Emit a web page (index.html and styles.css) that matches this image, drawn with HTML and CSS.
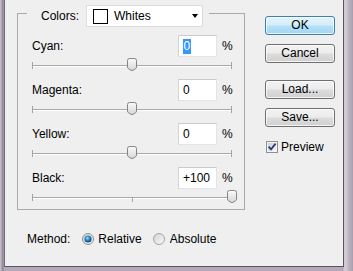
FILE: index.html
```html
<!DOCTYPE html>
<html>
<head>
<meta charset="utf-8">
<link rel="stylesheet" href="styles.css">
</head>
<body>
<svg class="defs" aria-hidden="true">
  <defs>
    <linearGradient id="thumbG" x1="0" y1="0" x2="0" y2="1">
      <stop offset="0" stop-color="#fafafa"/>
      <stop offset="1" stop-color="#d6d6d6"/>
    </linearGradient>
    <linearGradient id="radioBg" x1="0" y1="0" x2="1" y2="1">
      <stop offset="0" stop-color="#d2d2d2"/>
      <stop offset="1" stop-color="#fbfbfb"/>
    </linearGradient>
    <radialGradient id="dotG" cx="0.42" cy="0.38" r="0.65">
      <stop offset="0" stop-color="#9be0ff"/>
      <stop offset="0.45" stop-color="#2d8ccf"/>
      <stop offset="1" stop-color="#0d3b63"/>
    </radialGradient>
    <linearGradient id="cbInner" x1="0" y1="0" x2="1" y2="1">
      <stop offset="0" stop-color="#cbcfd5"/>
      <stop offset="1" stop-color="#f6f6f6"/>
    </linearGradient>
    <symbol id="thumb" viewBox="0 0 10 13">
      <path d="M0.5,2.5 Q0.5,0.5 2.5,0.5 H7.5 Q9.5,0.5 9.5,2.5 V9 Q9.5,10 8.5,10.8 L6,12.3 Q5,12.8 4,12.3 L1.5,10.8 Q0.5,10 0.5,9 Z" fill="url(#thumbG)" stroke="#858585"/>
    </symbol>
  </defs>
</svg>
<div class="dialog">
  <div class="top">
    <div class="group">
      <div class="legend">
        <span class="legend-label">Colors:</span>
        <div class="select">
          <span class="swatch"></span>
          <span class="select-text">Whites</span>
          <span class="arrow"></span>
        </div>
      </div>
      <div class="rows">
        <div class="row">
          <div class="field">
            <span class="label">Cyan:</span>
            <div class="input"><span class="sel">0</span></div>
            <span class="pct">%</span>
          </div>
          <div class="slider">
            <div class="track"><i class="tick t-start"></i><i class="tick t-mid"></i><i class="tick t-end"></i></div>
            <svg class="thumb" style="left:50%" viewBox="0 0 10 13"><use href="#thumb"/></svg>
          </div>
        </div>
        <div class="row">
          <div class="field">
            <span class="label">Magenta:</span>
            <div class="input"><span>0</span></div>
            <span class="pct">%</span>
          </div>
          <div class="slider">
            <div class="track"><i class="tick t-start"></i><i class="tick t-mid"></i><i class="tick t-end"></i></div>
            <svg class="thumb" style="left:50%" viewBox="0 0 10 13"><use href="#thumb"/></svg>
          </div>
        </div>
        <div class="row">
          <div class="field">
            <span class="label">Yellow:</span>
            <div class="input"><span>0</span></div>
            <span class="pct">%</span>
          </div>
          <div class="slider">
            <div class="track"><i class="tick t-start"></i><i class="tick t-mid"></i><i class="tick t-end"></i></div>
            <svg class="thumb" style="left:50%" viewBox="0 0 10 13"><use href="#thumb"/></svg>
          </div>
        </div>
        <div class="row">
          <div class="field">
            <span class="label">Black:</span>
            <div class="input"><span>+100</span></div>
            <span class="pct">%</span>
          </div>
          <div class="slider">
            <div class="track"><i class="tick t-start"></i><i class="tick t-mid"></i><i class="tick t-end"></i></div>
            <svg class="thumb" style="left:100%" viewBox="0 0 10 13"><use href="#thumb"/></svg>
          </div>
        </div>
      </div>
    </div>
    <div class="buttons">
      <div class="btn btn-ok">OK</div>
      <div class="btn btn-cancel">Cancel</div>
      <div class="btn btn-load">Load...</div>
      <div class="btn btn-save">Save...</div>
      <div class="preview">
        <svg class="checkbox" viewBox="0 0 12 12">
          <rect x="0.5" y="0.5" width="11" height="11" fill="#f4f4f4" stroke="#8f8f8f"/>
          <rect x="2" y="2" width="8" height="8" fill="url(#cbInner)"/>
          <path d="M2.6,5.6 L5,8.4 L9.6,2.6" fill="none" stroke="#27387a" stroke-width="1.7"/>
        </svg>
        <span>Preview</span>
      </div>
    </div>
  </div>
  <div class="method">
    <span class="method-label">Method:</span>
    <span class="opt">
      <svg class="radio" viewBox="0 0 12 12">
        <circle cx="6" cy="6" r="5.5" fill="url(#radioBg)" stroke="#8e8f8f"/>
        <circle cx="6" cy="6" r="3.6" fill="url(#dotG)"/>
      </svg>
      <span>Relative</span>
    </span>
    <span class="opt opt-second">
      <svg class="radio" viewBox="0 0 12 12">
        <circle cx="6" cy="6" r="5.5" fill="url(#radioBg)" stroke="#a2a3a3"/>
      </svg>
      <span>Absolute</span>
    </span>
  </div>
</div>
</body>
</html>
```
FILE: styles.css
```css
html, body {
  margin: 0;
  padding: 0;
}

body {
  width: 353px;
  height: 271px;
  overflow: hidden;
  font-family: "Liberation Sans", Arial, sans-serif;
  font-size: 12px;
  color: #000;
  background: linear-gradient(to right,
    #cbc6cf 0, #a59bac 2px, #877d8f 3px, #b3a9b8 4px,
    #b3a9b8 343px, #d8d4db 345px, #c1b8c6 348px, #a89dad 353px);
}

.defs {
  position: absolute;
  width: 0;
  height: 0;
  overflow: hidden;
}

.dialog {
  box-sizing: border-box;
  margin-left: 4px;
  width: 340px;
  height: 267px;
  padding: 13px 0 0 12px;
  background: #efefef;
  border: 1px solid #5a5360;
  border-top: none;
  border-left-color: #73697c;
}

.top {
  display: flex;
  align-items: flex-start;
}

.group {
  position: relative;
  box-sizing: border-box;
  width: 228px;
  height: 197px;
  border: 1px solid #a9a9a9;
  padding: 21px 0 0 14px;
}

.legend {
  position: absolute;
  top: -9px;
  left: 9px;
  height: 22px;
  display: flex;
  align-items: center;
  padding: 0 6px 0 14px;
  background: #efefef;
}

.legend-label {
  margin-right: 7px;
}

.select {
  box-sizing: border-box;
  width: 117px;
  height: 22px;
  display: flex;
  align-items: center;
  background: #fff;
  border: 1px solid #dddddd;
  padding: 0 4px 0 6px;
}

.swatch {
  box-sizing: border-box;
  width: 15px;
  height: 15px;
  border: 1px solid #000;
  background: #fff;
}

.select-text {
  margin-left: 6px;
}

.arrow {
  margin-left: auto;
  width: 0;
  height: 0;
  border-left: 3.5px solid transparent;
  border-right: 3.5px solid transparent;
  border-top: 4px solid #000;
}

.rows {
  display: flex;
  flex-direction: column;
  gap: 3px;
}

.field {
  display: flex;
  align-items: center;
  height: 22px;
}

.label {
  width: 146px;
}

.input {
  box-sizing: border-box;
  width: 39px;
  height: 22px;
  display: flex;
  align-items: center;
  padding-left: 4px;
  background: #fff;
  border: 1px solid #e2e4e8;
  border-top-color: #c8cbd0;
  border-left-color: #d2d4d8;
}

.sel {
  background: #3399ff;
  color: #fff;
  line-height: 15px;
  padding: 0 0.5px;
}

.pct {
  margin-left: 5px;
}

.slider {
  position: relative;
  box-sizing: border-box;
  width: 200px;
  height: 19px;
  padding-top: 8px;
}

.track {
  position: relative;
  height: 0;
  border-top: 1px solid #a9a9a9;
  border-bottom: 1px solid #ffffff;
}

.tick {
  position: absolute;
  width: 1px;
  background: #a4a4a4;
}

.t-start {
  left: 0;
  top: -4px;
  height: 7px;
}

.t-mid {
  left: 100px;
  top: -1px;
  height: 5px;
}

.t-end {
  right: 0;
  top: -4px;
  height: 7px;
}

.thumb {
  position: absolute;
  top: 1px;
  width: 10px;
  height: 13px;
  margin-left: -5px;
}

.buttons {
  margin-left: 20px;
  margin-top: 3px;
  width: 70px;
  display: flex;
  flex-direction: column;
}

.btn {
  box-sizing: border-box;
  height: 19px;
  line-height: 17px;
  text-align: center;
  border: 1px solid #707070;
  border-radius: 3px;
  background: linear-gradient(#f3f3f3 0, #ececec 48%, #dddddd 52%, #d0d0d0 100%);
  box-shadow: inset 0 0 0 1px rgba(255, 255, 255, 0.75);
}

.btn-ok {
  border-color: #3c7fb1;
  background: linear-gradient(#e6f5fc 0, #d2edfb 48%, #b6e1f8 52%, #a1d5f2 100%);
}

.btn-cancel {
  margin-top: 9px;
}

.btn-load {
  margin-top: 17px;
}

.btn-save {
  margin-top: 9px;
}

.preview {
  margin-top: 13px;
  height: 13px;
  display: flex;
  align-items: center;
}

.checkbox {
  width: 12px;
  height: 12px;
  margin-left: 1px;
  margin-right: 3px;
}

.method {
  display: flex;
  align-items: center;
  height: 14px;
  margin-top: 22px;
  margin-left: 10px;
}

.method-label {
  margin-right: 12px;
}

.opt {
  display: flex;
  align-items: center;
}

.opt-second {
  margin-left: 11px;
}

.radio {
  width: 12px;
  height: 12px;
  margin-right: 4px;
}

.opt-second .radio {
  margin-right: 5px;
}
```
